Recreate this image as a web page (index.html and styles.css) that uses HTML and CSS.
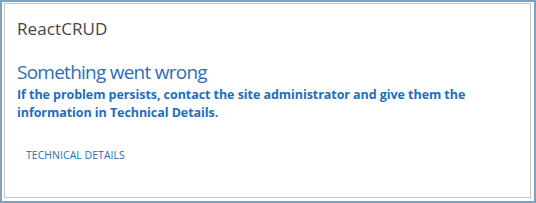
FILE: index.html
```html
<!DOCTYPE html>
<html lang="en">
<head>
    <meta charset="UTF-8">
    <title>ReactCRUD</title>
    <link rel="stylesheet" href="styles.css">
</head>
<body>
    <div class="frame">
        <div class="webpart">
            <div class="title">ReactCRUD</div>
            <div class="error">
                <h2>Something went wrong</h2>
                <p class="message">If the problem persists, contact the site administrator and give them the information in Technical Details.</p>
                <a class="details" href="#">TECHNICAL DETAILS</a>
            </div>
        </div>
    </div>
</body>
</html>
```

FILE: styles.css
```css
html, body {
    margin: 0;
    height: 100%;
}
body {
    font-family: "Open Sans", "Noto Sans", sans-serif;
    background-color: white;
}
.frame {
    box-sizing: border-box;
    height: 203px;
    width: 536px;
    border: 2px solid #7ea3c2;
    padding: 1px 3px 3px 2px;
}
.webpart {
    box-sizing: border-box;
    height: 100%;
    border: 1px solid #c6c6c6;
    padding: 13px 12px 0 12px;
}
.title {
    font-size: 17px;
    color: #444444;
    letter-spacing: 0.1px;
}
.error h2 {
    margin: 20px 0 0 0;
    font-size: 19px;
    font-weight: normal;
    color: #2f6db0;
    letter-spacing: -0.75px;
    line-height: 24px;
}
.message {
    margin: 2px 0 0 0;
    font-size: 12.5px;
    font-weight: bold;
    color: #1b6fbf;
    line-height: 18px;
    letter-spacing: -0.06px;
}
.details {
    display: inline-block;
    margin: 26px 0 0 9px;
    font-size: 10.5px;
    color: #2a6ea8;
    text-decoration: none;
    letter-spacing: 0.03px;
}
```
